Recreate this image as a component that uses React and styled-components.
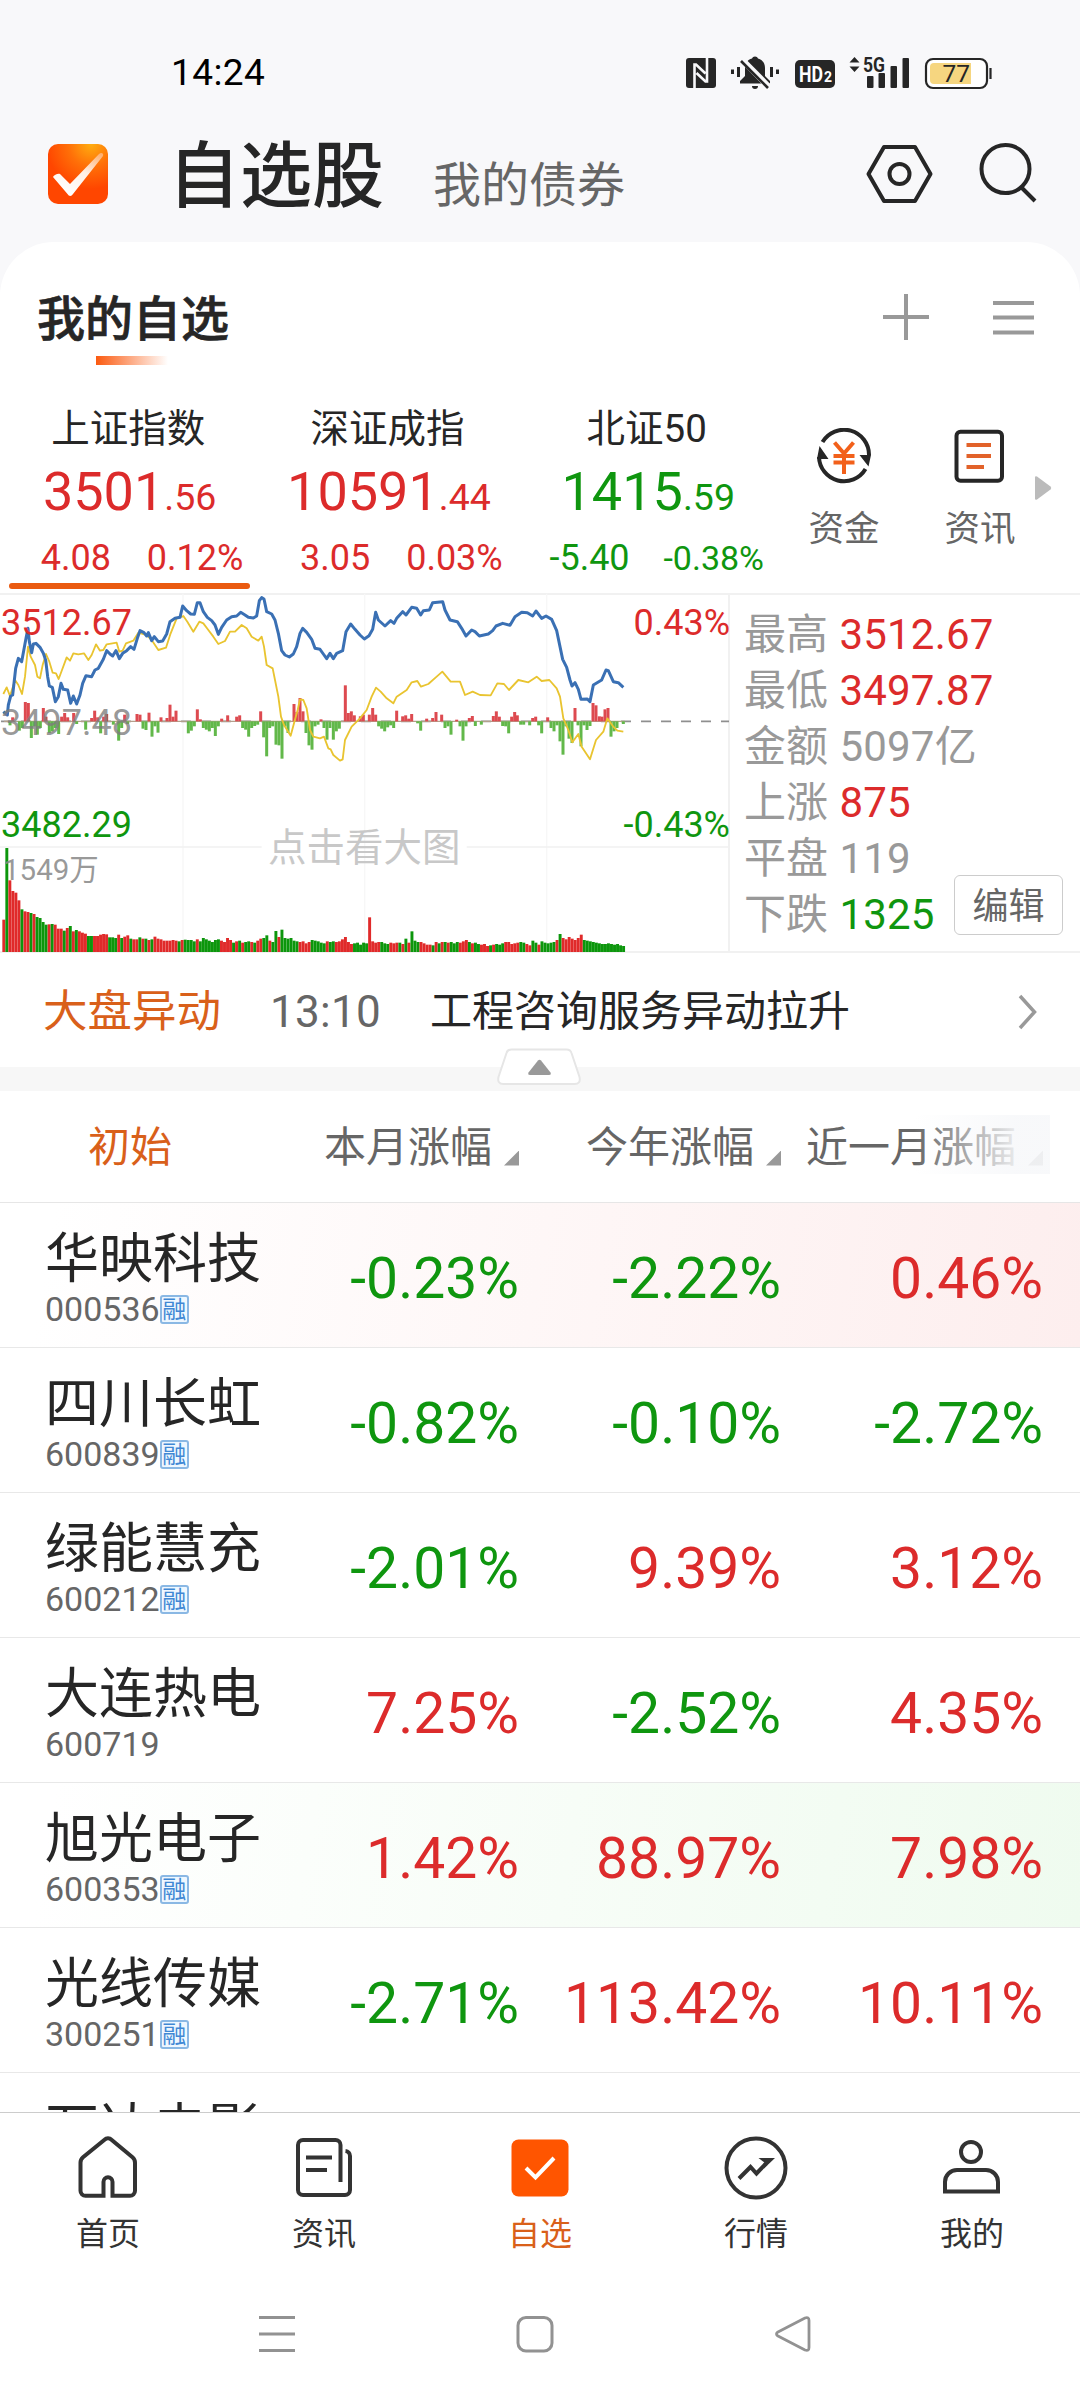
import React from 'react'
import styled, { createGlobalStyle } from 'styled-components'

const RED = '#dc2b2b'
const GREEN = '#0f960f'
const ORANGE = '#d9601a'

const tone = (value) => (String(value).startsWith('-') ? GREEN : RED)

const indices = [
  { name: '上证指数', whole: '3501', decimals: '.56', change: '4.08', percent: '0.12%', active: true },
  { name: '深证成指', whole: '10591', decimals: '.44', change: '3.05', percent: '0.03%' },
  { name: '北证50', whole: '1415', decimals: '.59', change: '-5.40', percent: '-0.38%' }
]

const stats = [
  { label: '最高', value: '3512.67', color: RED },
  { label: '最低', value: '3497.87', color: RED },
  { label: '金额', value: '5097亿', color: '#999' },
  { label: '上涨', value: '875', color: RED },
  { label: '平盘', value: '119', color: '#999' },
  { label: '下跌', value: '1325', color: GREEN }
]

const stocks = [
  { name: '华映科技', code: '000536', margin: true, values: ['-0.23%', '-2.22%', '0.46%'], glow: '#fdeeee' },
  { name: '四川长虹', code: '600839', margin: true, values: ['-0.82%', '-0.10%', '-2.72%'] },
  { name: '绿能慧充', code: '600212', margin: true, values: ['-2.01%', '9.39%', '3.12%'] },
  { name: '大连热电', code: '600719', margin: false, values: ['7.25%', '-2.52%', '4.35%'] },
  { name: '旭光电子', code: '600353', margin: true, values: ['1.42%', '88.97%', '7.98%'], glow: '#effbef' },
  { name: '光线传媒', code: '300251', margin: true, values: ['-2.71%', '113.42%', '10.11%'] },
  { name: '万达电影', values: [] }
]

// chart data, three units to the pixel
const priceLine = '10,395 22,405 25,375 32,348 38,345 47,265 55,235 65,245 78,175 84,145 88,185 95,218 100,192 108,190 120,202 130,220 137,240 143,290 148,318 157,322 166,365 175,350 183,310 190,328 203,330 212,370 220,348 230,372 240,345 248,310 258,287 275,290 285,270 295,265 310,238 320,212 330,222 338,228 348,212 358,236 368,220 380,212 392,200 402,208 412,175 420,152 432,158 440,168 445,158 455,182 463,170 475,185 488,183 500,162 510,125 525,115 540,112 548,78 560,92 572,102 583,103 592,68 600,68 610,95 622,112 635,122 645,135 655,163 665,142 680,120 695,110 710,108 722,97 735,105 745,112 760,114 770,108 778,62 785,53 792,57 800,95 815,102 825,120 835,160 845,212 855,225 868,231 880,222 890,200 900,160 908,145 920,157 935,178 945,205 960,208 970,222 980,236 990,220 1000,236 1010,220 1028,212 1038,155 1052,132 1065,148 1080,165 1093,177 1107,167 1118,148 1127,97 1135,120 1155,138 1172,122 1182,130 1190,115 1208,95 1218,105 1235,82 1250,85 1262,105 1270,92 1288,90 1298,68 1328,65 1335,90 1350,120 1372,125 1385,145 1398,168 1415,150 1425,155 1438,168 1465,162 1478,152 1488,138 1508,130 1530,136 1545,110 1565,97 1582,98 1598,108 1608,93 1625,115 1638,108 1655,118 1670,152 1680,200 1688,238 1700,262 1710,300 1716,318 1725,308 1735,328 1743,358 1762,357 1770,365 1780,315 1805,300 1818,270 1825,272 1840,305 1855,308 1870,322'

const averageLine = '10,342 20,322 30,348 45,300 55,315 66,342 75,290 84,200 92,230 105,255 112,290 120,295 128,255 138,222 148,245 158,278 168,280 176,297 186,270 200,232 210,242 220,220 235,223 252,220 265,240 275,225 288,193 300,212 310,210 320,193 350,188 358,215 368,212 378,190 400,182 415,158 440,165 455,180 475,210 498,203 512,160 530,115 550,108 562,125 580,155 598,125 610,130 625,150 640,170 655,192 675,183 690,155 705,155 725,135 740,145 755,170 775,182 785,170 792,200 800,255 818,265 825,300 835,350 843,410 852,435 872,467 882,430 893,390 900,358 910,360 920,385 930,450 940,470 960,475 972,470 985,505 992,508 1000,525 1020,542 1028,538 1035,480 1055,440 1080,415 1100,390 1115,350 1128,323 1142,335 1160,355 1180,370 1190,350 1220,330 1235,307 1252,303 1263,320 1285,312 1310,290 1327,275 1352,305 1380,305 1395,345 1418,335 1440,345 1472,346 1492,310 1512,312 1527,330 1555,300 1585,307 1610,290 1625,303 1648,300 1670,325 1680,350 1690,415 1705,450 1717,487 1735,462 1745,500 1770,538 1788,480 1810,455 1822,415 1840,440 1852,452 1870,455'

const momentum = [
  [30, -12], [38, 12], [58, -28], [67, -20], [76, 58], [85, 55], [94, -50], [103, -15], [112, -40], [121, -20],
  [130, 40], [138, 14], [148, -35], [157, -30], [166, -20], [176, -38], [185, 14], [194, 25], [203, 12], [221, 25],
  [230, -8], [257, -25], [275, 10], [284, 32], [293, 12], [302, -36], [311, 14], [320, 22], [340, -10], [356, -58],
  [365, -20], [374, 20], [383, -8], [411, 22], [420, 20], [429, -22], [438, -26], [447, 26], [456, -46], [465, -15],
  [474, -34], [483, 12], [501, 10], [510, 50], [519, 14], [528, 32], [565, -36], [574, -28], [583, -15], [592, 36],
  [601, 6], [610, -20], [619, -25], [628, -30], [637, -20], [646, -44], [655, -15], [665, 8], [683, 18], [710, 14],
  [719, 18], [728, -20], [737, -25], [746, -46], [755, -20], [764, -14], [773, -10], [782, 30], [791, -48], [800, -105],
  [809, -20], [818, -15], [828, -70], [837, -72], [846, -112], [855, -15], [864, -35], [882, 52], [891, 28], [900, 70],
  [909, 30], [918, -35], [927, -72], [936, -85], [945, -15], [954, -10], [963, 6], [972, -20], [981, -55], [990, -20],
  [1000, -55], [1009, -30], [1018, -22], [1036, 108], [1045, 25], [1054, 30], [1063, 18], [1081, 15], [1090, 20],
  [1108, 20], [1118, 40], [1127, 20], [1136, -15], [1145, -22], [1154, -30], [1163, -18], [1172, -12], [1181, -20],
  [1190, 32], [1208, 15], [1217, 18], [1226, 8], [1235, 22], [1253, -6], [1262, -28], [1280, 8], [1298, 10], [1308, 28],
  [1325, 20], [1335, -20], [1344, -15], [1353, -40], [1370, 5], [1380, -15], [1389, -58], [1398, -15], [1408, 10],
  [1417, 16], [1426, -14], [1444, -10], [1480, 16], [1489, 30], [1498, 14], [1508, -14], [1517, -15], [1526, -36],
  [1535, 14], [1544, 28], [1552, 18], [1562, -10], [1571, -10], [1589, -12], [1598, 10], [1607, 14], [1616, -12],
  [1625, -36], [1643, 12], [1653, -20], [1662, -30], [1671, -12], [1680, -60], [1689, -100], [1698, -15], [1707, -52],
  [1716, -65], [1725, 40], [1734, -12], [1743, -75], [1752, -12], [1761, -26], [1770, -14], [1779, 55], [1788, 48],
  [1798, 15], [1806, 14], [1815, 36], [1824, 40], [1833, -46], [1842, -30], [1851, -20], [1870, -8]
]

const volumes = [
  97, 312, 215, 183, 178, 155, 128, 122, 120, 117, 114, 105, 102, 90, 82, 83, 84, 82, 70, 70, 64, 72, 78, 62, 66, 62, 58, 55,
  48, 48, 48, 48, 52, 54, 53, 44, 44, 42, 52, 42, 46, 50, 40, 38, 38, 44, 40, 40, 36, 38, 46, 40, 38, 34, 34, 34, 36, 34, 32,
  36, 37, 36, 36, 32, 38, 32, 42, 38, 34, 30, 36, 38, 34, 30, 42, 36, 28, 32, 34, 28, 30, 32, 30, 28, 34, 40, 42, 50, 34, 30,
  63, 45, 67, 42, 40, 42, 34, 32, 30, 32, 26, 30, 36, 34, 32, 28, 26, 32, 30, 32, 30, 32, 38, 45, 30, 24, 26, 28, 22, 28, 26,
  104, 32, 28, 30, 30, 26, 24, 28, 26, 28, 28, 24, 40, 28, 62, 34, 30, 30, 26, 22, 22, 20, 30, 26, 30, 30, 28, 30, 26, 30, 28,
  32, 36, 30, 26, 28, 24, 22, 24, 18, 20, 22, 24, 22, 26, 30, 30, 24, 26, 28, 30, 28, 24, 20, 34, 28, 22,
  32, 28, 26, 28, 30, 36, 54, 42, 38, 45, 40, 36, 42, 52, 36, 34, 32, 30, 28, 26, 24, 24, 26, 24, 22, 24, 20, 18
].slice(0, 206)

const volumeSides =
  'RGRRRRGRRGRGGGGRGRRRGRGRGRRRGGRRRRRGGGRGRRGRRGRGRGRRRRRRRRGRGGGGRGGGGGGG' +
  'RRRRGRGRGGRGRRGGRGGRGGGGGGRRRRGGGGGRGGRRRRRRGGGGGRRRRGGGRRRGRGRGGGRRRRGRGRGRGGGRRRGRGGRRRGR' +
  'GGGRRRRRGGRRGGRGGGGGRGRRRRRRRGGGGGGG'

function Icon ({ w, h, children, ...rest }) {
  return (
    <svg width={w} height={h} viewBox={`0 0 ${w} ${h}`} fill="none" {...rest}>
      {children}
    </svg>
  )
}

function StatusIcons () {
  return (
    <svg width="310" height="48" viewBox="0 -6 310 48" fill="#262626">
      {/* nfc */}
      <rect x="3" y="3" width="30" height="30" rx="3" />
      <path d="M11.500 33V9.500h1.500l9.500 9M24 3v23.500h-1.500l-9-8.500" stroke="#f8f8fa" strokeWidth="2.600" fill="none" />
      {/* muted bell */}
      <path d="M72 1.500c1.500 0 2.500.8 3 2 4.500 1.200 7 4.800 7 9.500v8l5 5v2.500H57V26l5-5v-8c0-4.700 2.500-8.300 7-9.500.5-1.200 1.500-2 3-2z" />
      <path d="M69 31h6a3 3 0 0 1-6 0z" />
      <path d="M59 4.500L87 33" stroke="#f8f8fa" strokeWidth="6" />
      <path d="M58 6l27 27" stroke="#262626" strokeWidth="2.600" />
      <path d="M49.500 14.500v4.500M55.500 12v10M88.500 12v10M94.500 14.500v4.500" stroke="#262626" strokeWidth="3" />
      {/* hd */}
      <rect x="112" y="5" width="40" height="28" rx="5" />
      <text x="116" y="27" fill="#fff" fontSize="22" fontWeight="700" textLength="24" lengthAdjust="spacingAndGlyphs">HD</text>
      <text x="141" y="27" fill="#fff" fontSize="14" fontWeight="700">2</text>
      {/* signal */}
      <path d="M166.500 7.500l5-5.500 5 5.500zM166.500 11.500l5 5.500 5-5.500z" />
      <text x="180" y="16.500" fontSize="21" fontWeight="700" textLength="22" lengthAdjust="spacingAndGlyphs">5G</text>
      <rect x="184" y="21" width="6.500" height="12" rx="1" />
      <rect x="195.500" y="18" width="6.500" height="15" rx="1" />
      <rect x="207.500" y="11" width="6.500" height="22" rx="1" />
      <rect x="219.500" y="3" width="6.500" height="30" rx="1" />
      {/* battery */}
      <rect x="243" y="4" width="61" height="29" rx="7" fill="#fff" stroke="#262626" strokeWidth="2.200" />
      <path d="M251 8h37v21h-37a4 4 0 0 1-4-4v-13a4 4 0 0 1 4-4z" fill="#f6d680" />
      <path d="M307.500 13v11" stroke="#262626" strokeWidth="2.200" />
      <text x="259.500" y="27" fontSize="24.500">77</text>
    </svg>
  )
}

function Logo () {
  return (
    <Icon w={60} h={60}>
      <defs>
        <radialGradient id="logoGlow" cx="0.72" cy="0" r="0.75">
          <stop offset="0" stopColor="#ffae10" />
          <stop offset="0.5" stopColor="#ff7008" />
          <stop offset="1" stopColor="#ff4600" />
        </radialGradient>
        <linearGradient id="logoTick" x1="0.9" y1="0" x2="0.3" y2="1">
          <stop offset="0" stopColor="#ffb070" />
          <stop offset="0.45" stopColor="#fff0e6" />
          <stop offset="1" stopColor="#fff" />
        </linearGradient>
      </defs>
      <rect width="60" height="60" rx="10" fill="url(#logoGlow)" />
      <path d="M5 33c1-2 5-4 7-3l10 10L51 10c2-2 5-1 4 2L25 50c-1.500 2.500-4 2.500-5.500 0z" fill="url(#logoTick)" />
    </Icon>
  )
}

function HomeIcon () {
  return (
    <Icon w={64} h={64} stroke="#333" strokeWidth="4">
      <path d="M27.500 59.500H9.500a5 5 0 0 1-5-5V26.500a7 7 0 0 1 2.500-5.500L28.500 3.500a5 5 0 0 1 7 0L56.500 21a7 7 0 0 1 2.500 5.500v28a5 5 0 0 1-5 5H36.500V45.500a4.500 4.500 0 0 0-9 0z" transform="translate(0 .3)" />
    </Icon>
  )
}

function NewsIcon () {
  return (
    <Icon w={64} h={64} stroke="#333" strokeWidth="4">
      <path d="M48.500 46V9a5 5 0 0 0-5-5H11a5 5 0 0 0-5 5v45a5 5 0 0 0 5 5h42a5 5 0 0 0 5-5V20a5 5 0 0 0-4.500-5" />
      <path d="M14 21.500h26M14 34h21" />
    </Icon>
  )
}

function WatchIcon () {
  return (
    <Icon w={64} h={64}>
      <rect x="3.500" y="3.500" width="57" height="57" rx="7" fill="#ff5500" />
      <path d="M18 32l9.500 9.500L46 22" stroke="#fff" strokeWidth="4" />
    </Icon>
  )
}

function MarketIcon () {
  return (
    <Icon w={64} h={64}>
      <circle cx="32" cy="32" r="29.500" stroke="#333" strokeWidth="4" />
      <path d="M15 42.500L26.500 31l6 6.500L42 27.500" stroke="#333" strokeWidth="4" />
      <path d="M34.500 22H51L40 32.500l.5-6z" fill="#333" />
    </Icon>
  )
}

function PersonIcon () {
  return (
    <Icon w={64} h={64} stroke="#333" strokeWidth="4">
      <circle cx="31" cy="16" r="10" />
      <path d="M5 55.500V46a12 12 0 0 1 12-12h29a12 12 0 0 1 12 12v9.500z" />
    </Icon>
  )
}

function FundsIcon () {
  return (
    <Icon w={56} h={56}>
      <path d="M6.500 14A25 25 0 0 1 53 27M49.500 41A25 25 0 0 1 3 29" stroke="#262626" strokeWidth="4" />
      <path d="M43.500 27H55L52.500 38.500zM12.500 31H1L3.500 18z" fill="#262626" />
      <path d="M18.500 14.500L28 25.500l9.500-11M28 25v21M17.500 28h21M17.500 34.500h21" stroke="#f2601a" strokeWidth="4" />
    </Icon>
  )
}

function ArticleIcon () {
  return (
    <Icon w={56} h={56}>
      <rect x="4.500" y="3.700" width="45.500" height="49" rx="4" stroke="#262626" strokeWidth="4" />
      <path d="M14.500 17H39M14.500 28H39M14.500 39H32" stroke="#e2622a" strokeWidth="4" />
    </Icon>
  )
}

function IntradayChart () {
  return (
    <svg width="730" height="360" viewBox="0 39 2190 1080">
      <g stroke="#f7f7f7" strokeWidth="4">
        <path d="M549 41V1116M1094 41V1116M1640 41V1116" />
        <path d="M0 801H785M1400 801H2187" stroke="#f1f1f1" />
      </g>
      <path d="M3 424H2187" stroke="#8f8f8f" strokeWidth="5" strokeDasharray="30 30" />
      <path d="M12 424H1875" stroke="#b4a08c" strokeWidth="4" />
      {momentum.map(([x, size]) => (
        <rect
          key={x}
          x={x - 4.500}
          y={size > 0 ? 424 - size : 424}
          width="9"
          height={Math.abs(size)}
          fill={size > 0 ? '#dd4a50' : '#62b84a'}
        />
      ))}
      {volumes.map((size, i) => (
        <rect
          key={i}
          x={7 + i * 9.070}
          y={1116 - size}
          width="8.800"
          height={size}
          fill={volumeSides[i] === 'R' ? '#e02a2a' : '#0c960c'}
        />
      ))}
      <polyline points={averageLine} fill="none" stroke="#e9c430" strokeWidth="5.500" strokeLinejoin="round" />
      <polyline points={priceLine} fill="none" stroke="#3a70b4" strokeWidth="9" strokeLinejoin="round" />
    </svg>
  )
}

export default function App () {
  return (
    <>
      <GlobalStyle />
      <Phone>
        <StatusBar>
          <Clock>14:24</Clock>
          <StatusIcons />
        </StatusBar>

        <Header>
          <Logo />
          <Title>自选股</Title>
          <SubTitle>我的债券</SubTitle>
          <HeaderTools>
            <Icon w={70} h={64} stroke="#262626" strokeWidth="4">
              <path d="M4.500 32L20 5h31l15.500 27L51 59H20z" strokeLinejoin="round" />
              <circle cx="35.500" cy="32" r="10" />
            </Icon>
            <Icon w={60} h={64} stroke="#262626" strokeWidth="4">
              <circle cx="27.500" cy="27" r="24" />
              <path d="M43.500 45.500L57 59" />
            </Icon>
          </HeaderTools>
        </Header>

        <Card>
          <TabRow>
            <ActiveTab>我的自选</ActiveTab>
            <TabTools>
              <Icon w={46} h={46} stroke="#999" strokeWidth="4">
                <path d="M23 0v46M0 23h46" />
              </Icon>
              <Icon w={41} h={46} stroke="#999" strokeWidth="4">
                <path d="M0 9h41M0 23.500h41M0 38.500h41" />
              </Icon>
            </TabTools>
          </TabRow>

          <IndexRow>
            {indices.map((item) => (
              <IndexCard key={item.name}>
                <IndexName>{item.name}</IndexName>
                <IndexValue $color={tone(item.change)}>
                  {item.whole}
                  <small>{item.decimals}</small>
                </IndexValue>
                <IndexChange $color={tone(item.change)} $tight={item.percent.length > 5}>
                  <span>{item.change}</span>
                  <span>{item.percent}</span>
                </IndexChange>
                {item.active && <IndexMarker />}
              </IndexCard>
            ))}
            <Shortcut>
              <FundsIcon />
              资金
            </Shortcut>
            <Shortcut>
              <ArticleIcon />
              资讯
            </Shortcut>
            <MoreArrow>
              <Icon w={18} h={26}>
                <path d="M1 2.500q0-2 2-1l13.500 10q1.500 1.500 0 3L3 24.500q-2 1-2-1z" fill="#bbb" />
              </Icon>
            </MoreArrow>
          </IndexRow>

          <MarketPanel>
            <ChartBox>
              <IntradayChart />
              <ChartLabel $top={16} $left={1} $color={RED}>3512.67</ChartLabel>
              <ChartLabel $top={116} $left={1} $color="rgba(125,125,125,.8)">3497.48</ChartLabel>
              <ChartLabel $top={218} $left={1} $color={GREEN}>3482.29</ChartLabel>
              <ChartLabel $top={16} $right={-2} $color={RED}>0.43%</ChartLabel>
              <ChartLabel $top={218} $right={-2} $color={GREEN}>-0.43%</ChartLabel>
              <ChartLabel $top={263} $left={3} $size={29.500} $color="rgba(135,135,135,.85)">1549万</ChartLabel>
              <ChartLabel $top={241} $left={268} $size={38.500} $color="#c8c8c8">点击看大图</ChartLabel>
            </ChartBox>
            <Stats>
              {stats.map((item) => (
                <StatRow key={item.label} $color={item.color}>
                  {item.label} <b>{item.value}</b>
                </StatRow>
              ))}
              <EditButton>编辑</EditButton>
            </Stats>
          </MarketPanel>

          <NewsRow>
            <NewsTag>大盘异动</NewsTag>
            <NewsTime>13:10</NewsTime>
            <NewsText>工程咨询服务异动拉升</NewsText>
            <Icon w={20} h={36} stroke="#999" strokeWidth="3.500">
              <path d="M2 2l14.500 16L2 34" />
            </Icon>
          </NewsRow>

          <Divider>
            <Collapse>
              <Icon w={90} h={38}>
                <path d="M12.500 5q1-3.500 5-3.500h55q4 0 5 3.500l8 24q1.500 7-5 7h-71q-6.500 0-5-7z" fill="#fff" stroke="#e6e6e6" strokeWidth="2" />
                <path d="M44 12.500q1.500-1.500 3 0l9.500 12q1 2.500-1.500 2.500H36q-2.500 0-1.500-2.500z" fill="#999" />
              </Icon>
            </Collapse>
          </Divider>

          <TableHead>
            <HeadFirst>初始</HeadFirst>
            <HeadCell>本月涨幅<Corner /></HeadCell>
            <HeadCell>今年涨幅<Corner /></HeadCell>
            <HeadCell>近一月涨幅<Corner /></HeadCell>
            <HeadFade />
          </TableHead>

          {stocks.map((stock) => (
            <StockRow key={stock.name} $glow={stock.glow}>
              <div>
                <StockName>{stock.name}</StockName>
                {stock.code && (
                  <StockCode>
                    {stock.code}
                    {stock.margin && <MarginBadge>融</MarginBadge>}
                  </StockCode>
                )}
              </div>
              {stock.values.map((value, i) => (
                <Percent key={i} $color={tone(value)}>{value}</Percent>
              ))}
            </StockRow>
          ))}
        </Card>

        <TabBar>
          <TabItem><HomeIcon />首页</TabItem>
          <TabItem><NewsIcon />资讯</TabItem>
          <TabItem $active><WatchIcon />自选</TabItem>
          <TabItem><MarketIcon />行情</TabItem>
          <TabItem><PersonIcon />我的</TabItem>
        </TabBar>

        <SystemBar>
          <Icon w={38} h={38} stroke="#929292" strokeWidth="3">
            <path d="M1 2.500h36M1 19h36M1 35.500h36" />
          </Icon>
          <Icon w={38} h={38} stroke="#929292" strokeWidth="3">
            <rect x="2" y="2.500" width="34" height="33.500" rx="8" />
          </Icon>
          <Icon w={38} h={38} stroke="#929292" strokeWidth="2.800" strokeLinejoin="round">
            <path d="M3.500 17.300L31 3q4-1.500 4 2.500v27q0 4-4 2.500L3.500 20.700q-2-1.700 0-3.400z" />
          </Icon>
        </SystemBar>
      </Phone>
    </>
  )
}

const GlobalStyle = createGlobalStyle`
  * {
    box-sizing: border-box;
  }

  body {
    margin: 0;
    font-family: Roboto, 'Noto Sans CJK SC', sans-serif;
    color: #262626;
  }

  svg {
    display: block;
    flex: none;
  }
`

const Phone = styled.div`
  display: flex;
  flex-direction: column;
  width: 1080px;
  height: 2400px;
  overflow: hidden;
  background: #f8f8fa;
`

const StatusBar = styled.div`
  display: flex;
  flex: none;
  align-items: center;
  justify-content: space-between;
  height: 110px;
  padding: 35px 87px 0 171px;
`

const Clock = styled.span`
  font-size: 37px;
  letter-spacing: 0.400px;
  color: #000;
`

const Header = styled.header`
  display: flex;
  flex: none;
  align-items: center;
  height: 132px;
  padding: 0 42px 4px 48px;
`

const Title = styled.h1`
  margin: 5px 0 0 60px;
  font-size: 72px;
  font-weight: 500;
  line-height: 80px;
`

const SubTitle = styled.span`
  margin: 24px 0 0 49px;
  font-size: 48px;
  line-height: 56px;
  color: #666;
`

const HeaderTools = styled.div`
  display: flex;
  gap: 44px;
  margin-left: auto;
`

const Card = styled.main`
  flex: 1;
  min-height: 0;
  overflow: hidden;
  background: #fff;
  border-radius: 54px 54px 0 0;
`

const TabRow = styled.div`
  display: flex;
  justify-content: space-between;
  height: 156px;
  padding: 48px 46px 0 37px;
`

const ActiveTab = styled.div`
  font-size: 48px;
  font-weight: 500;
  line-height: 60px;
  -webkit-text-stroke: 0.700px #262626;

  &::after {
    content: '';
    display: block;
    width: 72px;
    height: 9px;
    margin: 6px 0 0 59px;
    background: linear-gradient(90deg, #fb5a10, #fff);
  }
`

const TabTools = styled.div`
  display: flex;
  gap: 64px;
  padding-top: 4px;
`

const IndexRow = styled.div`
  display: flex;
  height: 195px;
`

const IndexCard = styled.div`
  width: 259.300px;
`

const IndexName = styled.div`
  padding: 6px 3px 0 0;
  font-size: 38.500px;
  line-height: 50px;
  text-align: center;
`

const IndexValue = styled.div`
  font-size: 54px;
  line-height: 75px;
  text-align: center;
  color: ${(p) => p.$color};

  small {
    font-size: 37.500px;
  }
`

const IndexChange = styled.div`
  display: flex;
  font-size: 36px;
  line-height: 47px;
  color: ${(p) => p.$color};

  span:first-child {
    width: 111px;
    text-align: right;
  }

  span:last-child {
    flex: 1;
    padding-left: 20px;
    font-size: ${(p) => (p.$tight ? 34 : 36)}px;
    text-align: center;
    white-space: nowrap;
  }
`

const IndexMarker = styled.div`
  width: 241px;
  height: 6px;
  margin: 1px 0 0 9px;
  border-radius: 3px;
  background: #ea5a10;
`

const Shortcut = styled.div`
  display: flex;
  flex-direction: column;
  align-items: center;
  gap: 20px;
  width: 136px;
  padding-top: 30px;
  font-size: 35.500px;
  line-height: 50px;
  color: #666;

  ${IndexCard} + & {
    margin-left: -2px;
  }
`

const MoreArrow = styled.div`
  padding: 77px 0 0;
  margin-left: -14px;
`

const MarketPanel = styled.div`
  display: flex;
  height: 360px;
  border-top: 2px solid #f1f1f1;
  border-bottom: 2px solid #f1f1f1;
`

const ChartBox = styled.div`
  position: relative;
  width: 730px;
  border-right: 2px solid #f1f1f1;

  svg {
    margin-top: -2px;
  }
`

const ChartLabel = styled.span`
  position: absolute;
  top: ${(p) => p.$top - 8}px;
  left: ${(p) => (p.$left === undefined ? 'auto' : `${p.$left}px`)};
  right: ${(p) => (p.$right === undefined ? 'auto' : `${p.$right}px`)};
  font-size: ${(p) => p.$size || 36}px;
  line-height: 40px;
  color: ${(p) => p.$color};
`

const Stats = styled.div`
  position: relative;
  flex: 1;
  padding: 12px 0 0 14px;
`

const StatRow = styled.div`
  font-size: 42px;
  line-height: 56px;
  color: #999;

  b {
    margin-left: 1px;
    font-weight: 400;
    letter-spacing: 0.200px;
    color: ${(p) => p.$color};
  }
`

const EditButton = styled.button`
  position: absolute;
  right: 17px;
  bottom: 16px;
  width: 109px;
  height: 60px;
  padding: 3px 0 0;
  border: 1px solid #ccc;
  border-radius: 6px;
  background: #fff;
  font: 36px Roboto, 'Noto Sans CJK SC', sans-serif;
  line-height: 56px;
  color: #666;
`

const NewsRow = styled.div`
  display: flex;
  align-items: center;
  height: 114px;
  padding: 3px 42px 0 43px;
  line-height: 60px;
`

const NewsTag = styled.span`
  width: 227px;
  font-size: 44.500px;
  color: ${ORANGE};
`

const NewsTime = styled.span`
  width: 160px;
  font-size: 44px;
  letter-spacing: 0.300px;
  color: #666;
`

const NewsText = styled.span`
  flex: 1;
  font-size: 42px;
`

const Divider = styled.div`
  position: relative;
  height: 24px;
  background: #f7f7f7;
`

const Collapse = styled.div`
  position: absolute;
  top: -19px;
  left: 494px;
`

const TableHead = styled.div`
  position: relative;
  display: grid;
  grid-template-columns: 257px 262px 262px 262px;
  align-items: center;
  height: 112px;
  padding-top: 2px;
  border-bottom: 1px solid #e6e6e6;
  font-size: 42px;
  line-height: 60px;
  color: #666;
`

const HeadFirst = styled.div`
  padding-left: 88px;
  color: ${ORANGE};
`

const HeadCell = styled.div`
  display: flex;
  align-items: flex-end;
  justify-content: flex-end;
  white-space: nowrap;
`

const Corner = styled.i`
  width: 15px;
  height: 15px;
  margin: 0 0 12px 12px;
  background: #999;
  clip-path: polygon(100% 0, 100% 100%, 0 100%);
`

const HeadFade = styled.div`
  position: absolute;
  top: 24px;
  left: 914px;
  width: 136px;
  height: 59px;
  background: linear-gradient(90deg, rgba(247, 248, 250, 0), rgba(247, 248, 250, 0.900) 75%);
`

const StockRow = styled.div`
  display: grid;
  grid-template-columns: 257px 262px 262px 262px;
  height: 145px;
  border-bottom: 1px solid #e8e8e8;
  background: ${(p) => (p.$glow ? `linear-gradient(100deg, #fff 5%, ${p.$glow})` : '#fff')};
`

const StockName = styled.div`
  padding: 24px 0 0 45px;
  font-size: 54px;
  line-height: 66px;
  white-space: nowrap;
`

const StockCode = styled.div`
  display: flex;
  align-items: center;
  margin-top: -1px;
  padding-left: 45px;
  font-size: 34px;
  line-height: 34px;
  color: #666;
`

const MarginBadge = styled.span`
  width: 29px;
  height: 29px;
  border: 2px solid #8ab8e4;
  border-radius: 3px;
  background: #eef7ff;
  font-size: 24px;
  line-height: 27px;
  text-align: center;
  color: #4088d4;
`

const Percent = styled.div`
  padding-top: 5px;
  font-size: 57px;
  line-height: 141px;
  text-align: right;
  color: ${(p) => p.$color};
`

const TabBar = styled.nav`
  display: flex;
  flex: none;
  height: 168px;
  border-top: 1px solid #ccc;
  background: #fff;
`

const TabItem = styled.div`
  display: flex;
  flex: 1;
  flex-direction: column;
  align-items: center;
  gap: 14px;
  padding-top: 23px;
  font-size: 32px;
  line-height: 40px;
  color: ${(p) => (p.$active ? ORANGE : '#333')};
`

const SystemBar = styled.div`
  display: flex;
  flex: none;
  justify-content: space-between;
  height: 120px;
  padding: 35px 268px 0 258px;
  background: #fff;
`
